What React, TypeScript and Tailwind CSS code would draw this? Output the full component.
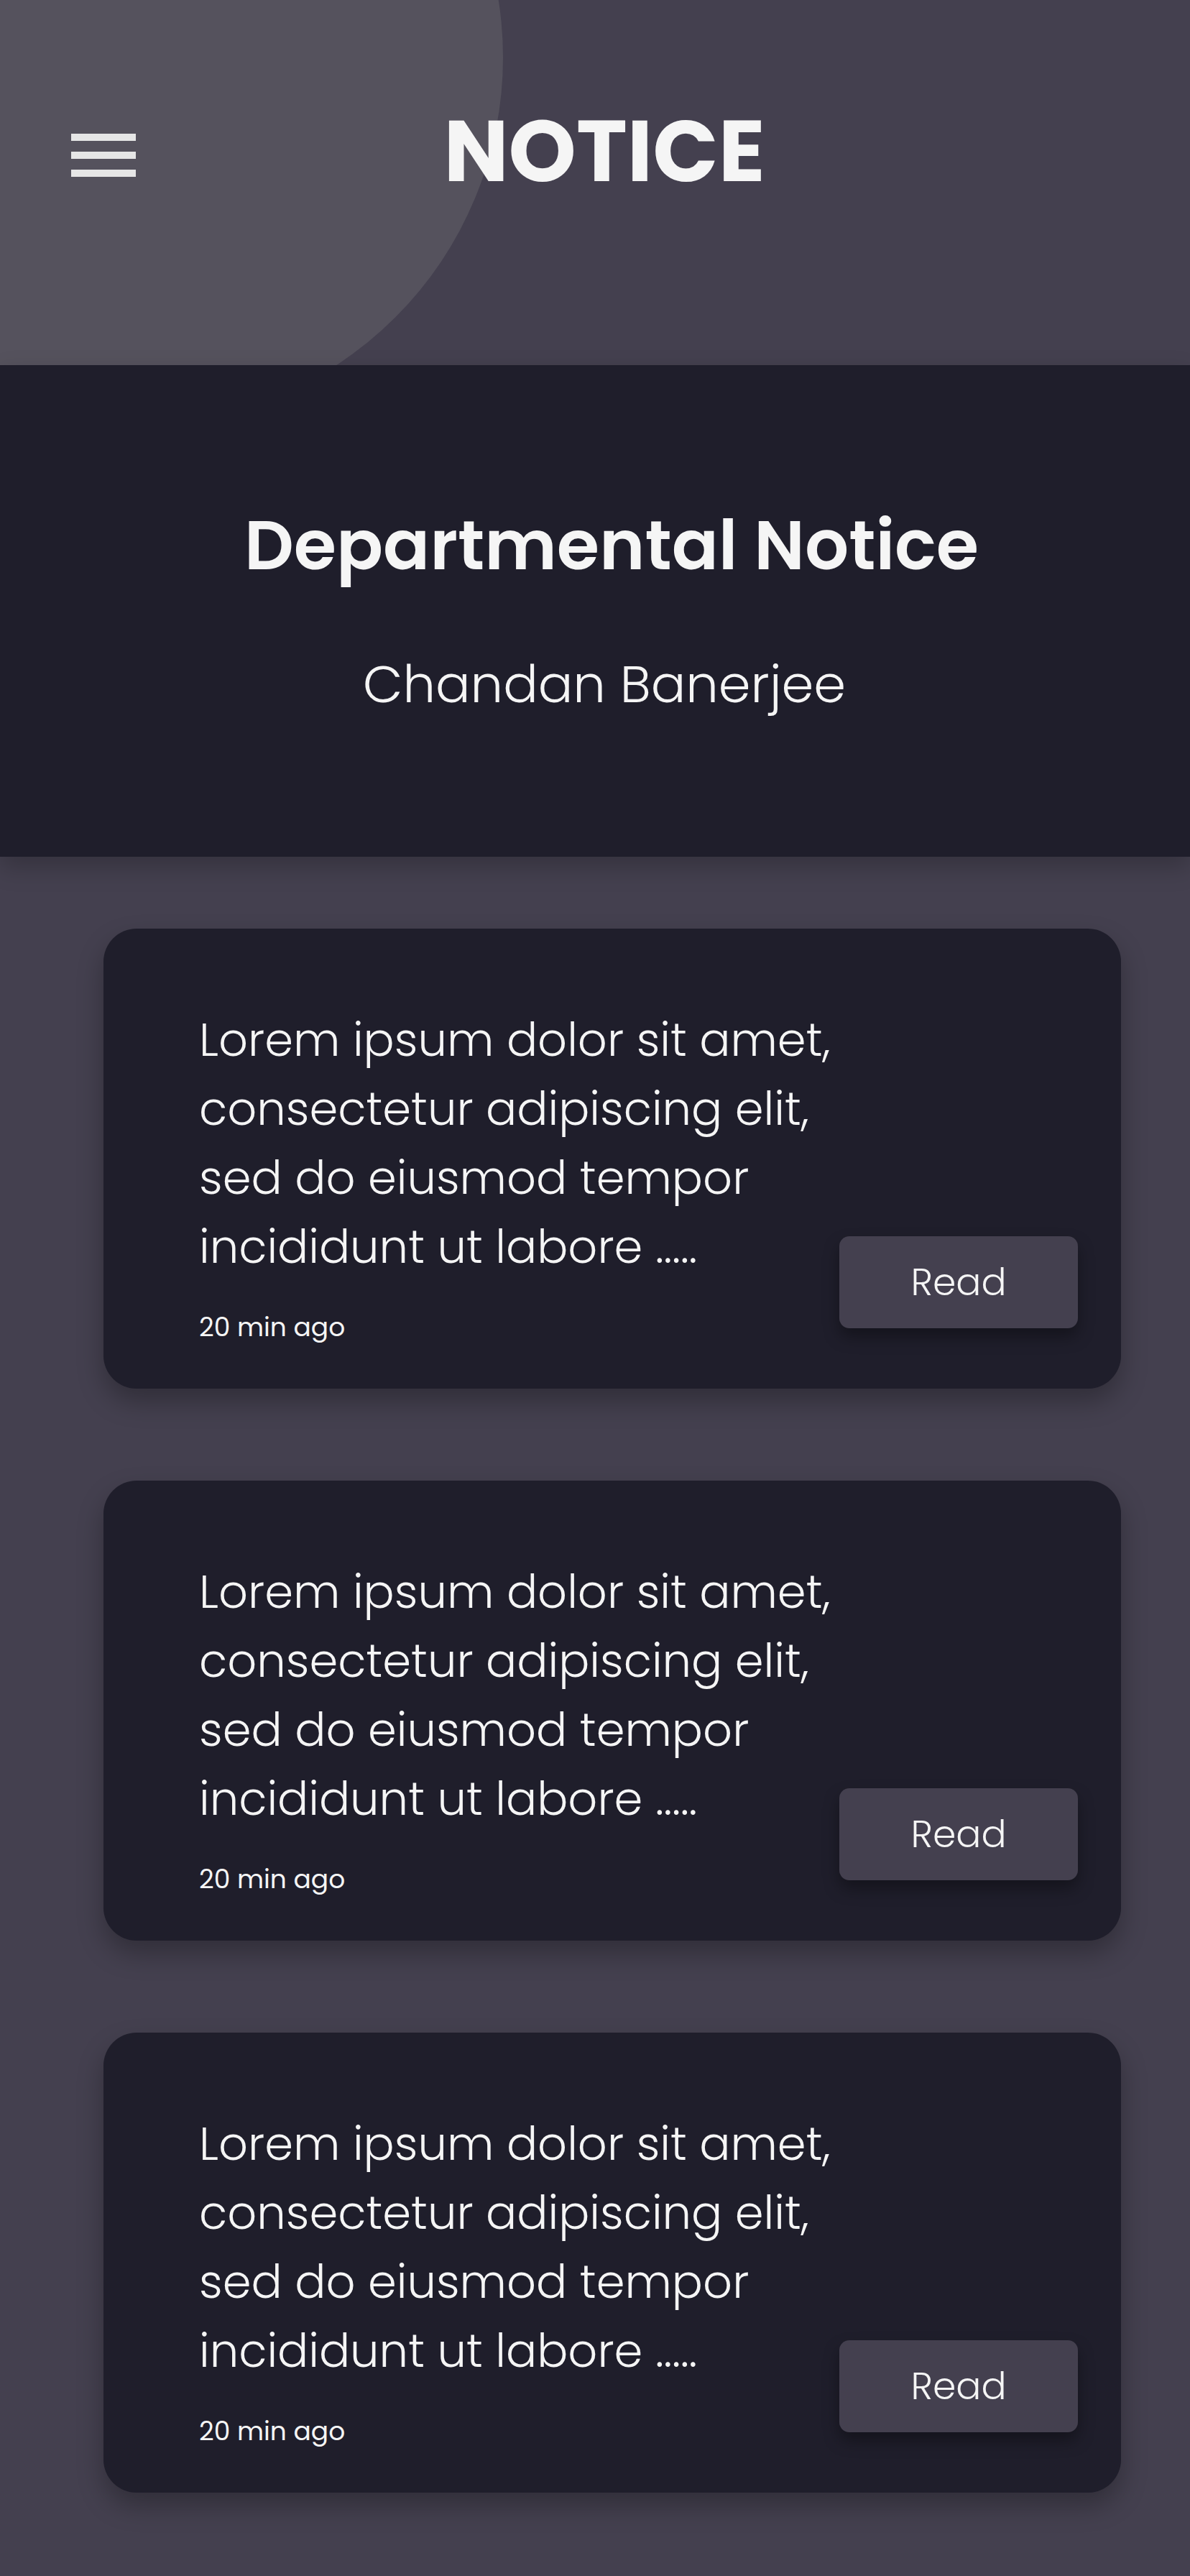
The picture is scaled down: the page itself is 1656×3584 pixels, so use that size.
import React from 'react';

const notices = [1, 2, 3];

const NoticeCard: React.FC = () => {
  return (
    <div className="flex h-[640px] items-end justify-between rounded-[46px] bg-[#1f1e2b] pl-[133px] pr-[60px] pb-[58px] pt-[107px] shadow-[0_18px_36px_rgba(0,0,0,0.28)]">
      <div className="flex h-full flex-col">
        <p className="whitespace-nowrap text-[64px] leading-[96px] font-light text-[#f5f5f5]">
          Lorem ipsum dolor sit amet,
          <br />
          consectetur adipiscing elit,
          <br />
          sed do eiusmod tempor
          <br />
          incididunt ut labore .....
        </p>
        <span className="mt-auto whitespace-nowrap text-[36px] leading-[54px] text-[#f5f5f5]">20 min ago</span>
      </div>
      <button className="mb-[26px] flex h-[128px] w-[332px] shrink-0 items-center justify-center rounded-[14px] bg-[#44404f] text-[52px] font-light text-[#f5f5f5] shadow-[0_12px_22px_rgba(0,0,0,0.35)]">
        Read
      </button>
    </div>
  );
};

export default function App() {
  return (
    <div className="min-h-screen w-full bg-[#44404f] font-['Poppins','Open_Sans',sans-serif]">
      {/* Header */}
      <header className="relative h-[508px] overflow-hidden bg-[#44404f]">
        <div className="absolute left-[-322px] top-[-431px] h-[1022px] w-[1022px] rounded-full bg-[#55525d]"></div>
        <div className="relative grid grid-cols-[1fr_auto_1fr] items-start pl-[99px] pr-[73px] pt-[150px]">
          <div className="flex flex-col gap-[15px] pt-[36px]">
            <span className="block h-[10px] w-[90px] bg-[#e6e6e6]"></span>
            <span className="block h-[10px] w-[90px] bg-[#e6e6e6]"></span>
            <span className="block h-[10px] w-[90px] bg-[#e6e6e6]"></span>
          </div>
          <h1 className="text-[120px] leading-[120px] font-bold text-[#f5f5f5]">NOTICE</h1>
          <div></div>
        </div>
      </header>

      {/* Title band */}
      <section className="relative z-10 flex h-[684px] flex-col items-center bg-[#1f1e2b] pt-[193px] pl-[26px] shadow-[0_14px_32px_rgba(0,0,0,0.22)]">
        <h2 className="ml-[20px] text-[96px] leading-[116px] font-semibold text-[#f5f5f5]">Departmental Notice</h2>
        <p className="mt-[92px] text-[72px] leading-[86px] font-light text-[#f5f5f5]">Chandan Banerjee</p>
      </section>

      {/* Notices */}
      <main className="flex flex-col gap-[128px] pl-[144px] pr-[96px] pt-[100px] pb-[116px]">
        {notices.map((n) => (
          <NoticeCard key={n} />
        ))}
      </main>
    </div>
  );
}
